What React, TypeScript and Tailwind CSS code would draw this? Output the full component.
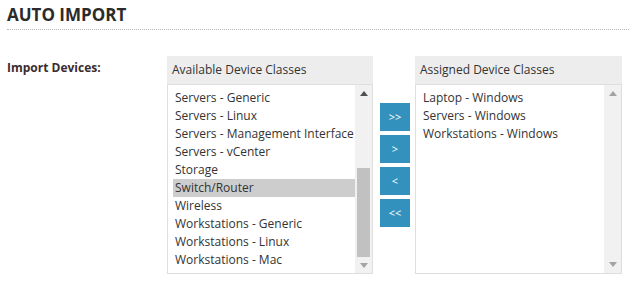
import React from 'react';

const available = [
  'Servers - Generic',
  'Servers - Linux',
  'Servers - Management Interface',
  'Servers - vCenter',
  'Storage',
  'Switch/Router',
  'Wireless',
  'Workstations - Generic',
  'Workstations - Linux',
  'Workstations - Mac',
];

const assigned = ['Laptop - Windows', 'Servers - Windows', 'Workstations - Windows'];

function Scrollbar({ thumb }: { thumb: boolean }) {
  return (
    <div className="w-[17px] shrink-0 bg-[#f1f1f1] flex flex-col items-center">
      <div className="h-[17px] flex items-center justify-center">
        <svg width="8" height="5" viewBox="0 0 8 5"><path d="M4 0 L8 5 L0 5 Z" fill={thumb ? '#505050' : '#a3a3a3'} /></svg>
      </div>
      <div className="flex-1 w-full px-[2px] flex flex-col">
        {thumb && <div className="mt-[67px] h-[89px] bg-[#c1c1c1]" />}
      </div>
      <div className="h-[17px] flex items-center justify-center">
        <svg width="8" height="5" viewBox="0 0 8 5"><path d="M0 0 L8 0 L4 5 Z" fill="#a3a3a3" /></svg>
      </div>
    </div>
  );
}

function ListPanel({ title, items, selected, thumb, width }: { title: string; items: string[]; selected?: string; thumb: boolean; width: string }) {
  return (
    <div className={`${width} flex flex-col bg-[#ededed]`}>
      <div className="h-[28px] px-[5px] flex items-center text-[12px] text-[#333]">{title}</div>
      <div className="h-[190px] border border-[#dedede] bg-white flex">
        <div className="flex-1 pt-[4px] pl-[5px]">
          {items.map((it) => (
            <div
              key={it}
              className={`h-[18px] leading-[18px] pl-[2px] text-[12px] text-[#333] whitespace-nowrap ${it === selected ? 'bg-[#cdcdcd]' : ''}`}
            >
              {it}
            </div>
          ))}
        </div>
        <Scrollbar thumb={thumb} />
      </div>
    </div>
  );
}

function MoveButton({ label }: { label: string }) {
  return (
    <button className="w-[30px] h-[28px] bg-[#3392bd] text-white text-[11px] flex items-center justify-center">
      {label}
    </button>
  );
}

export default function App() {
  return (
    <div className="w-[629px] h-[281px] bg-white pl-[7px] font-['Open_Sans',sans-serif] text-[#333]">
      <h1 className="pt-[4px] text-[17px] leading-[22px] font-bold text-[#2b2b2b]">AUTO IMPORT</h1>
      <div className="mt-[3px] border-b border-dotted border-[#b5b5b5]" />
      <div className="mt-[26px] flex">
        <div className="w-[160px] pt-[3px] text-[12px] font-bold text-[#3a2c2c]">Import Devices:</div>
        <ListPanel title="Available Device Classes" items={available} selected="Switch/Router" thumb width="w-[206px]" />
        <div className="w-[42px] pt-[47px] pl-[7px] flex flex-col gap-[4px]">
          <MoveButton label=">>" />
          <MoveButton label=">" />
          <MoveButton label="<" />
          <MoveButton label="<<" />
        </div>
        <ListPanel title="Assigned Device Classes" items={assigned} thumb={false} width="w-[207px]" />
      </div>
    </div>
  );
}
